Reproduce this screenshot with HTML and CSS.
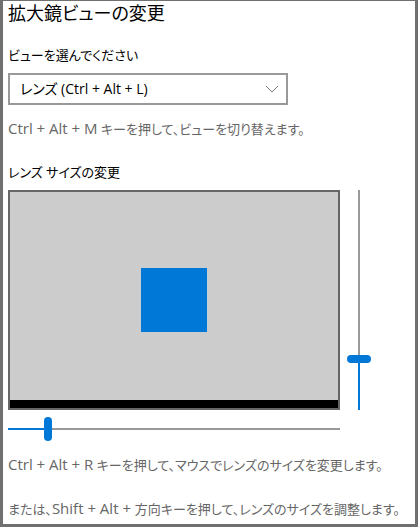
FILE: index.html
```html
<!DOCTYPE html>
<html lang="ja">
<head>
<meta charset="utf-8">
<meta name="viewport" content="width=device-width, initial-scale=1">
<title>拡大鏡ビューの変更</title>
<link rel="stylesheet" href="styles.css">
</head>
<body>
<main class="panel">
  <h1 class="title">拡大鏡ビューの変更</h1>

  <section class="field">
    <label class="label" for="view">ビューを選んでください</label>
    <div class="select">
      <select class="select-box" id="view">
        <option selected>レンズ (Ctrl + Alt + L)</option>
      </select>
      <svg class="select-arrow" viewBox="0 0 14 8" aria-hidden="true"><path d="M1 1l6 6 6-6"/></svg>
    </div>
    <p class="hint"><kbd class="keys">Ctrl + Alt + M</kbd> キーを押して、ビューを切り替えます。</p>
  </section>

  <section class="field">
    <h2 class="label">レンズ サイズの変更</h2>
    <div class="sizer">
      <div class="preview">
        <div class="lens" style="width: 20%; height: 30%"></div>
        <div class="taskbar"></div>
      </div>
      <input class="slider slider-height" type="range" min="10" max="100" value="30" aria-label="レンズの高さ" style="--fill: 22%">
      <input class="slider slider-width" type="range" min="10" max="100" value="20" aria-label="レンズの幅" style="--fill: 11%">
    </div>
    <p class="hint"><kbd class="keys">Ctrl + Alt + R</kbd> キーを押して、マウスでレンズのサイズを変更します。</p>
    <p class="hint">または、<kbd class="keys">Shift + Alt + </kbd>方向キーを押して、レンズのサイズを調整します。</p>
  </section>
</main>
</body>
</html>
```
FILE: styles.css
```css
* {
  box-sizing: border-box;
}

body {
  margin: 0;
  background: #fff;
  color: #000;
  font: 13px/20px "Open Sans", "Noto Sans CJK JP", sans-serif;
  font-feature-settings: "palt";
}

.panel {
  min-height: 100vh;
  padding: 0 0 4px 5px;
  border: 3px solid #707070;
  border-top-width: 1px;
}

.title,
.label,
.hint {
  display: block;
  margin: 0;
  font-weight: 400;
}

.title {
  font-size: 18px;
  line-height: 24px;
}

.field {
  padding-top: 20px;
}

.field + .field {
  padding-top: 23px;
}

.label {
  margin-bottom: 8px;
  font-size: 13px;
}

.hint {
  margin-top: 14px;
  color: #666;
}

.hint + .hint {
  margin-top: 24px;
}

.keys {
  font-family: inherit;
  font-size: 15px;
  line-height: 1;
}

.select {
  position: relative;
  max-width: 280px;
}

.select-box {
  display: block;
  width: 100%;
  height: 32px;
  padding: 0 32px 0 10px;
  appearance: none;
  border: 2px solid #999;
  border-radius: 0;
  background: #fff;
  color: #000;
  font: inherit;
  font-size: 14px;
  font-feature-settings: inherit;
}

.select-arrow {
  position: absolute;
  top: 12px;
  right: 9px;
  width: 14px;
  height: 8px;
  fill: none;
  stroke: #777;
  pointer-events: none;
}

.sizer {
  display: grid;
  grid-template-columns: 1fr 24px;
  gap: 7px;
  padding-right: 44px;
}

.preview {
  position: relative;
  display: grid;
  place-items: center;
  height: 220px;
  border: 2px solid #666;
  background: #ccc;
}

.lens {
  background: #0078d7;
}

.taskbar {
  position: absolute;
  right: 0;
  bottom: 0;
  left: 0;
  height: 8px;
  background: #000;
}

.slider {
  --direction: to right;
  display: block;
  margin: 0;
  appearance: none;
  background: linear-gradient(var(--direction), #0078d7 var(--fill), #999 var(--fill)) center / 100% 2px no-repeat;
}

.slider-width {
  width: 100%;
  height: 24px;
}

.slider-height {
  --direction: to top;
  width: 24px;
  height: 100%;
  writing-mode: vertical-lr;
  direction: rtl;
  background-size: 2px 100%;
}

.slider::-webkit-slider-thumb {
  width: 8px;
  height: 24px;
  appearance: none;
  border: 0;
  border-radius: 4px;
  background: #0078d7;
}

.slider-height::-webkit-slider-thumb {
  width: 24px;
  height: 8px;
}
```
